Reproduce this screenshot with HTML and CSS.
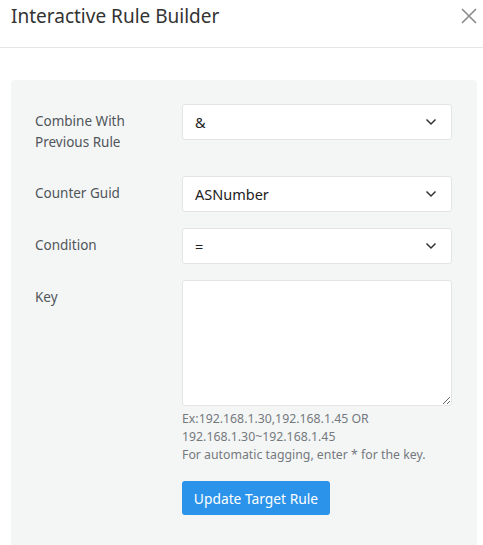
FILE: index.html
```html
<!DOCTYPE html>
<html>
<head>
<meta charset="utf-8">
<link rel="stylesheet" href="styles.css">
</head>
<body>
<div class="modal">
  <div class="modal-header">
    <h5 class="modal-title">Interactive Rule Builder</h5>
    <button class="close" aria-label="Close">
      <svg width="16" height="16" viewBox="0 0 16 16"><path d="M1 1L15 15M15 1L1 15" stroke="#8a8a8a" stroke-width="1.6" fill="none"/></svg>
    </button>
  </div>
  <div class="modal-body">
    <div class="panel">
      <div class="form-row">
        <label class="col-label">Combine With<br>Previous Rule</label>
        <div class="col-field">
          <div class="select"><span>&amp;</span><svg class="chev" width="12" height="8" viewBox="0 0 12 8"><path d="M1.5 1.5L6 6L10.5 1.5" stroke="#333" stroke-width="1.5" fill="none"/></svg></div>
        </div>
      </div>
      <div class="form-row">
        <label class="col-label">Counter Guid</label>
        <div class="col-field">
          <div class="select"><span>ASNumber</span><svg class="chev" width="12" height="8" viewBox="0 0 12 8"><path d="M1.5 1.5L6 6L10.5 1.5" stroke="#333" stroke-width="1.5" fill="none"/></svg></div>
        </div>
      </div>
      <div class="form-row">
        <label class="col-label">Condition</label>
        <div class="col-field">
          <div class="select"><span>=</span><svg class="chev" width="12" height="8" viewBox="0 0 12 8"><path d="M1.5 1.5L6 6L10.5 1.5" stroke="#333" stroke-width="1.5" fill="none"/></svg></div>
        </div>
      </div>
      <div class="form-row">
        <label class="col-label">Key</label>
        <div class="col-field">
          <textarea class="textarea"></textarea>
          <div class="help">Ex:192.168.1.30,192.168.1.45 OR 192.168.1.30~192.168.1.45</div>
          <div class="help">For automatic tagging, enter * for the key.</div>
        </div>
      </div>
      <div class="form-row">
        <div class="col-label"></div>
        <div class="col-field">
          <button class="btn">Update Target Rule</button>
        </div>
      </div>
    </div>
  </div>
</div>
</body>
</html>
```

FILE: styles.css
```css
* { box-sizing: border-box; }
html, body { margin: 0; padding: 0; background: #fff; }
body {
  font-family: "Noto Sans", "Open Sans", sans-serif;
  color: #4a4f55;
  width: 483px;
  height: 545px;
  overflow: hidden;
}
.modal { width: 483px; }
.modal-header {
  height: 48px;
  border-bottom: 1px solid #e6e6e6;
  display: flex;
  justify-content: space-between;
  align-items: flex-start;
  padding: 3px 6px 0 11px;
}
.modal-title {
  margin: 0;
  font-size: 19px;
  font-weight: 400;
  color: #333;
  line-height: 26px;
}
.close {
  border: 0;
  background: none;
  padding: 0;
  margin-top: 5px;
  width: 16px;
  height: 16px;
  display: block;
}
.close svg { display: block; }
.modal-body { padding: 32px 6px 0 11px; }
.panel {
  background: #f4f6f6;
  border-radius: 4px 4px 0 0;
  padding: 24px 25px 40px 24px;
  min-height: 470px;
}
.form-row {
  display: flex;
  margin-bottom: 16px;
}
.col-label {
  width: 147px;
  flex: none;
  font-size: 13.5px;
  line-height: 21px;
  padding: 7px 0;
  color: #50555a;
}
.col-field { flex: 1; }
.select {
  height: 36px;
  background: #fff;
  border: 1px solid #e4e4e4;
  border-radius: 3px;
  display: flex;
  align-items: center;
  justify-content: space-between;
  padding: 0 14px 0 12px;
  font-size: 14.5px;
  color: #222;
}
.chev { display: block; }
.textarea {
  display: block;
  width: 100%;
  height: 126px;
  background: #fff;
  border: 1px solid #e4e4e4;
  border-radius: 3px;
  resize: vertical;
  font-family: inherit;
}
.help {
  font-size: 12.3px;
  line-height: 18px;
  color: #74797e;
}
.col-field .textarea + .help { margin-top: 4px; padding-right: 60px; }
.btn {
  margin-top: 1px;
  height: 34px;
  width: 148px;
  border: 0;
  border-radius: 3px;
  background: #2b93e9;
  color: #fff;
  font-family: inherit;
  font-size: 13.8px;
  padding: 0;
}
```
